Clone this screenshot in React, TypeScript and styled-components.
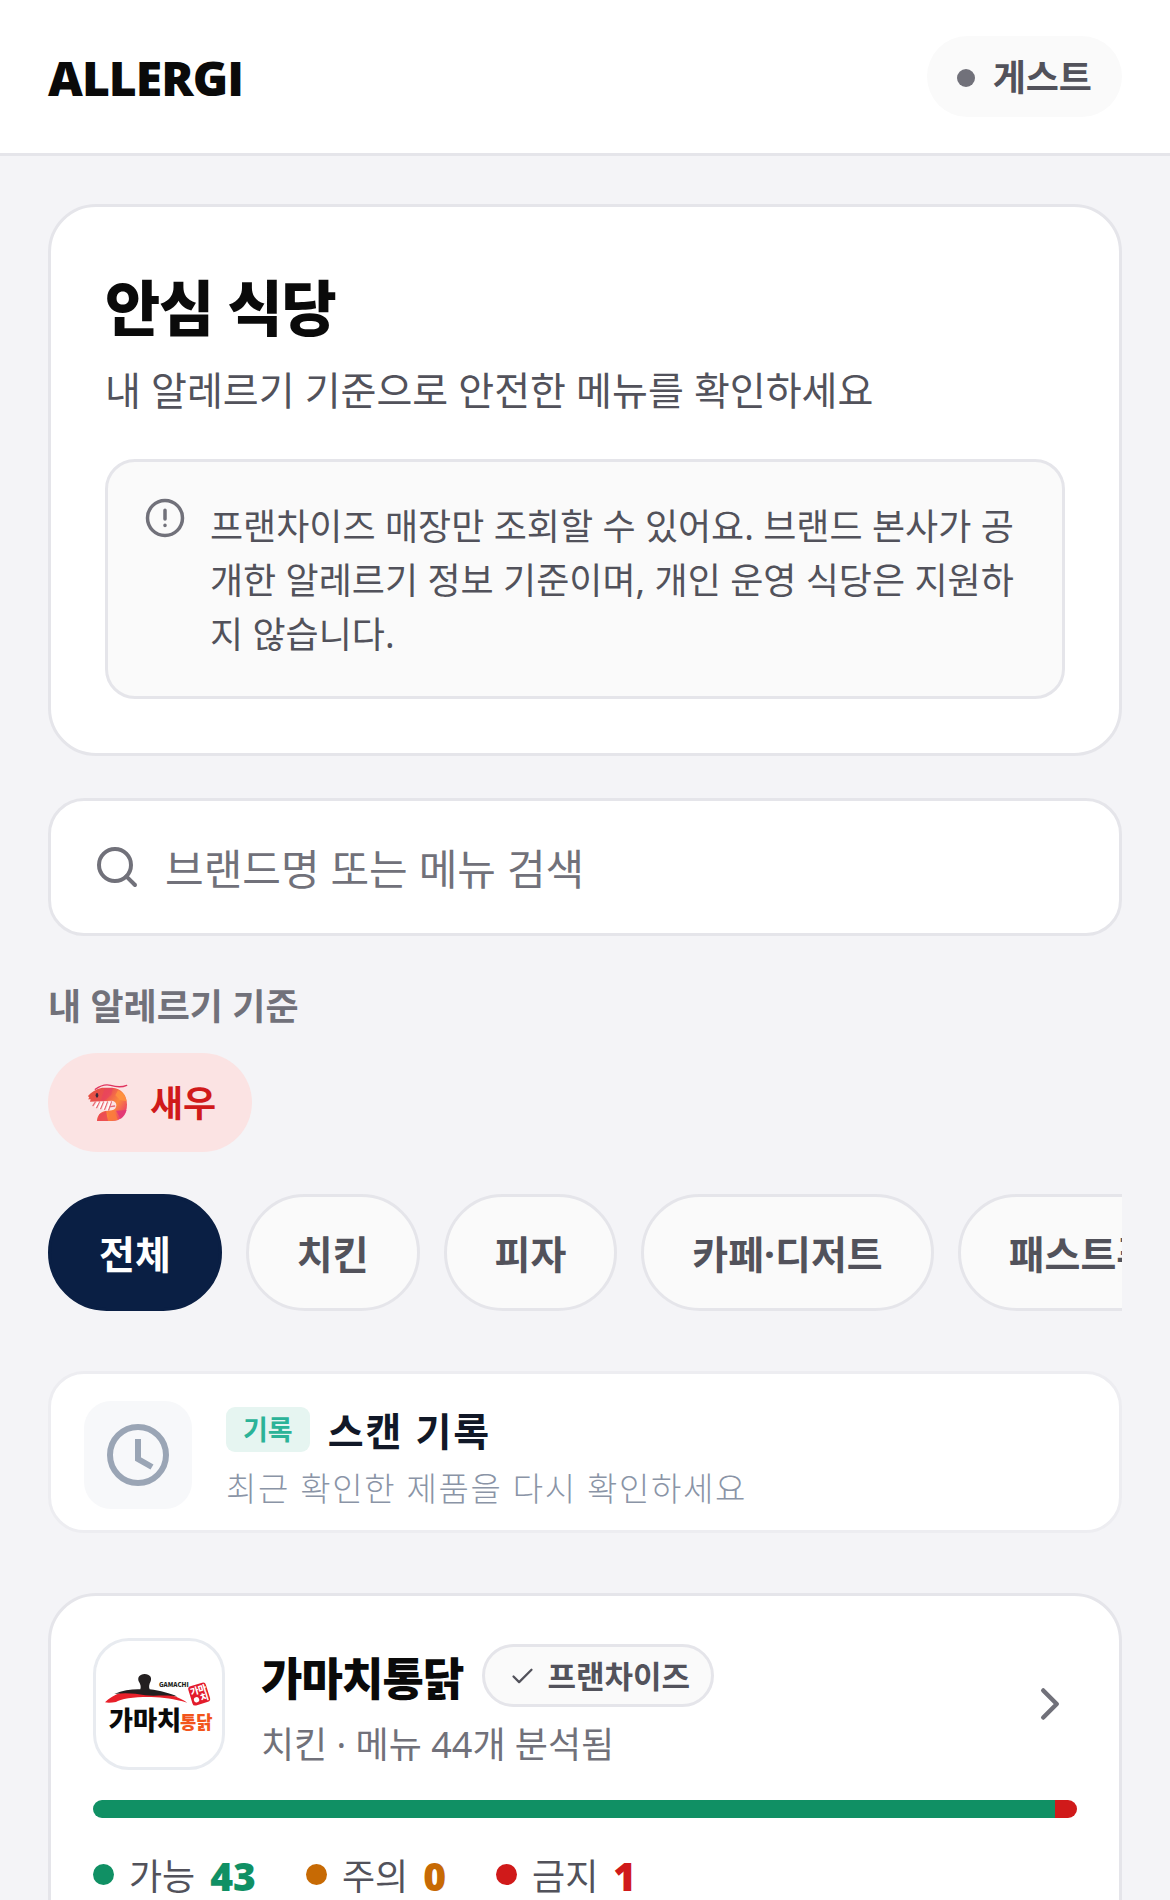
import React, { useState } from "react";
import styled, { createGlobalStyle } from "styled-components";
import { Search, ChevronRight, Check } from "lucide-react";

const GlobalStyle = createGlobalStyle`
  *, *::before, *::after { box-sizing: border-box; }
  body {
    margin: 0;
    background: #f4f4f7;
    color: #0a0a0a;
    font-family: "Noto Sans", "Noto Sans CJK KR", sans-serif;
    overflow-x: hidden;
  }
  h1, h2, h3, p, ul { margin: 0; padding: 0; }
  ul { list-style: none; }
  button, input { font: inherit; color: inherit; }
`;

const Header = styled.header`
  display: flex;
  align-items: center;
  justify-content: space-between;
  padding: 36px 48px;
  background: #fff;
  border-bottom: 3px solid #e5e5ea;
`;

const Wordmark = styled.a`
  padding-top: 2px;
  font-family: "Open Sans", "Noto Sans", sans-serif;
  font-size: 48px;
  line-height: 72px;
  font-weight: 800;
  letter-spacing: -0.02em;
  color: #0a0a0a;
  text-decoration: none;
`;

const Dot = styled.span<{ $color: string; $size: number }>`
  flex: none;
  width: ${(p) => p.$size}px;
  height: ${(p) => p.$size}px;
  border-radius: 50%;
  background: ${(p) => p.$color};
`;

const UserPill = styled.button`
  display: flex;
  align-items: center;
  gap: 18px;
  padding: 15px 30px 12px;
  border: 0;
  border-radius: 999px;
  background: #fafafa;
  color: #52525b;
  font-size: 36px;
  line-height: 54px;
  font-weight: 600;
`;

const Main = styled.main`
  display: flex;
  flex-direction: column;
  padding: 48px;
`;

const Intro = styled.section`
  padding: 56px 54px 54px;
  background: #fff;
  border: 3px solid #e5e5ea;
  border-radius: 48px;
`;

const Title = styled.h1`
  font-size: 60px;
  line-height: 90px;
  font-weight: 900;
  letter-spacing: -0.02em;
`;

const Subtitle = styled.p`
  margin-top: 7px;
  font-size: 39px;
  line-height: 60px;
  color: #52525b;
`;

const Notice = styled.div`
  display: flex;
  align-items: flex-start;
  gap: 24px;
  margin-top: 39px;
  padding: 35px 36px 34px;
  background: #fafafa;
  border: 3px solid #e5e5ea;
  border-radius: 30px;
  color: #52525b;
  font-size: 36px;
  line-height: 54px;
  svg { flex: none; color: #71717a; }
  p { padding-top: 3px; }
`;

const SearchBox = styled.label`
  display: flex;
  align-items: center;
  gap: 24px;
  height: 138px;
  margin-top: 42px;
  padding: 0 42px;
  background: #fff;
  border: 3px solid #e5e5ea;
  border-radius: 36px;
  color: #71717a;
  svg { flex: none; }
`;

const SearchInput = styled.input`
  flex: 1;
  min-width: 0;
  padding: 4px 0 0;
  border: 0;
  outline: 0;
  background: transparent;
  font-size: 42px;
  line-height: 60px;
  &::placeholder { color: #71717a; opacity: 1; }
`;

const SectionLabel = styled.h2`
  margin-top: 44px;
  font-size: 36px;
  line-height: 54px;
  font-weight: 700;
  color: #71717a;
`;

const AllergyChips = styled.ul`
  display: flex;
  gap: 18px;
  margin-top: 19px;
`;

const AllergyChip = styled.li`
  display: flex;
  align-items: center;
  gap: 21px;
  padding: 24px 36px 21px;
  border-radius: 999px;
  background: #fbe3e3;
  color: #d01a1a;
  font-size: 36px;
  line-height: 54px;
  font-weight: 700;
`;

const Categories = styled.nav`
  display: flex;
  gap: 24px;
  margin-top: 42px;
  overflow: hidden;
`;

const Category = styled.button<{ $active: boolean }>`
  flex: none;
  padding: 28px 48px 26px;
  border: 3px solid ${(p) => (p.$active ? "#0a1f44" : "#e5e5ea")};
  border-radius: 999px;
  background: ${(p) => (p.$active ? "#0a1f44" : "#fafafa")};
  color: ${(p) => (p.$active ? "#fff" : "#52525b")};
  font-size: 39px;
  line-height: 57px;
  font-weight: 700;
  white-space: nowrap;
`;

const History = styled.a`
  display: flex;
  align-items: flex-start;
  gap: 34px;
  margin-top: 60px;
  padding: 27px 33px 16px;
  background: #fff;
  border: 3px solid #ededf1;
  border-radius: 36px;
  color: #111827;
  text-decoration: none;
`;

const HistoryIcon = styled.span`
  display: grid;
  place-items: center;
  flex: none;
  width: 108px;
  height: 108px;
  border-radius: 27px;
  background: #f7f8fa;
`;

const HistoryHead = styled.span`
  display: flex;
  align-items: center;
  gap: 18px;
`;

const HistoryTag = styled.span`
  padding: 1px 17px 0;
  border-radius: 9px;
  background: #e6f5f1;
  color: #2bb398;
  font-size: 27px;
  line-height: 44px;
  font-weight: 600;
`;

const HistoryTitle = styled.span`
  padding-top: 3px;
  font-size: 39px;
  line-height: 54px;
  font-weight: 700;
  letter-spacing: 0.05em;
`;

const HistoryText = styled.span`
  display: block;
  margin-top: 5px;
  font-size: 33px;
  line-height: 51px;
  font-weight: 300;
  letter-spacing: 0.05em;
  color: #8a94a6;
`;

const BrandCard = styled.article`
  margin-top: 60px;
  padding: 42px;
  background: #fff;
  border: 3px solid #e5e5ea;
  border-radius: 48px;
`;

const BrandHead = styled.div`
  display: flex;
  align-items: center;
  gap: 36px;
  > svg { flex: none; color: #71717a; }
`;

const BrandLogo = styled.div`
  flex: none;
  width: 132px;
  height: 132px;
  border: 3px solid #e8ebf0;
  border-radius: 36px;
  background: #fff;
  overflow: hidden;
  svg { display: block; }
`;

const BrandInfo = styled.div`
  flex: 1;
  min-width: 0;
`;

const BrandTitleRow = styled.div`
  display: flex;
  align-items: center;
  gap: 18px;
`;

const BrandName = styled.h3`
  padding-top: 8px;
  font-size: 45px;
  line-height: 66px;
  font-weight: 900;
  letter-spacing: -0.02em;
`;

const BrandBadge = styled.span`
  display: flex;
  align-items: center;
  gap: 12px;
  padding: 7px 21px 5px 24px;
  border: 3px solid #e5e5ea;
  border-radius: 999px;
  background: #fafafa;
  color: #52525b;
  font-size: 31px;
  line-height: 45px;
  font-weight: 600;
`;

const BrandMeta = styled.p`
  margin-top: 7px;
  font-size: 36px;
  line-height: 51px;
  color: #71717a;
`;

const Bar = styled.div`
  display: flex;
  height: 18px;
  margin-top: 30px;
  border-radius: 9px;
  overflow: hidden;
`;

const BarPart = styled.span<{ $color: string }>`
  background: ${(p) => p.$color};
`;

const Legend = styled.ul`
  display: flex;
  gap: 50px;
  margin-top: 26px;
`;

const LegendItem = styled.li`
  display: flex;
  align-items: center;
  gap: 15px;
  font-size: 36px;
  line-height: 54px;
  color: #52525b;
`;

const LegendLabel = styled.span`
  padding-top: 6px;
`;

const Count = styled.strong<{ $color: string }>`
  padding-top: 3px;
  font-size: 39px;
  font-weight: 900;
  color: ${(p) => p.$color};
`;

const InfoIcon = () => (
  <svg width="42" height="42" viewBox="0 0 24 24" fill="none" stroke="currentColor" strokeWidth="2" strokeLinecap="round" aria-hidden="true">
    <circle cx="12" cy="12" r="10" />
    <path d="M12 7.5v5M12 16.2v.1" />
  </svg>
);

const Shrimp = () => (
  <svg width="45" height="42" viewBox="42 69 135 126" aria-hidden="true">
    <defs>
      <linearGradient id="shell" x1="0" y1="0" x2="1" y2="0.6">
        <stop offset="0" stopColor="#e4513c" />
        <stop offset="0.45" stopColor="#ec4f52" />
        <stop offset="0.75" stopColor="#fb8a3c" />
        <stop offset="1" stopColor="#ee4a62" />
      </linearGradient>
    </defs>
    <path d="M76 88C92 76 106 72 122 76C138 81 154 83 170 76" fill="none" stroke="#e0345f" strokeWidth="4" strokeLinecap="round" />
    <path d="M54 108C64 96 78 87 96 83H126C154 84 171 104 171 134C171 164 153 183 126 183H81C81 168 90 156 106 153L124 152C134 150 139 144 139 136C139 128 134 123 126 122L60 125L62 118L54 118L58 113Z" fill="url(#shell)" />
    <path d="M104 84H128L124 104L104 122H92Z" fill="#e83f62" opacity="0.55" />
    <path d="M144 91C158 98 168 110 170 124L150 120L136 106Z" fill="#ff9440" opacity="0.8" />
    <path d="M138 152L170 150C167 162 160 171 152 177Z" fill="#e0337a" opacity="0.8" />
    <path d="M88 163L108 153L114 183H81Z" fill="#ea4456" opacity="0.8" />
    <path d="M114 153L132 150L144 180L116 183Z" fill="#fb7b3c" opacity="0.9" />
    <path d="M76 126L69 137M88 126L80 143M100 126L92 146M112 126L104 148M124 126L116 150M134 138L122 140" fill="none" stroke="#e86a74" strokeWidth="4" strokeLinecap="round" />
    <path d="M84 127L76 140M96 127L88 144M108 127L100 146M120 127L112 148" fill="none" stroke="#fff" strokeWidth="4" strokeLinecap="round" />
    <ellipse cx="81" cy="106" rx="4" ry="7" fill="#3a2a3c" />
  </svg>
);

const ClockIcon = () => (
  <svg width="62" height="62" viewBox="0 0 62 62" fill="none" stroke="#9aa5b5" aria-hidden="true">
    <circle cx="31" cy="31" r="28" strokeWidth="6" />
    <path d="M31 15V35L45 43" strokeWidth="6" />
  </svg>
);

const LogoText = styled.text`
  font-family: "Noto Sans CJK KR", sans-serif;
  font-weight: 900;
`;

const GamachiLogo = () => (
  <svg width="126" height="126" viewBox="48 63 378 378" role="img" aria-label="가마치통닭">
    <path d="M75 247C108 212 168 205 222 213C264 220 296 230 322 248C282 236 250 233 214 231C170 230 120 236 108 246C96 248 84 249 75 247Z" fill="#e8202a" />
    <path d="M103 222C128 211 158 207 181 208C184 200 181 192 176 184C172 172 178 163 194 162C210 163 216 172 212 184C207 194 206 202 209 208C240 212 272 220 292 230C258 223 226 230 196 226C166 220 134 218 103 222Z" fill="#231f20" />
    <LogoText x="237" y="202" fontSize="19" fill="#231f20">GAMACHI</LogoText>
    <g transform="rotate(-17 358 222)">
      <rect x="330" y="192" width="55" height="60" rx="9" fill="#e31b2b" />
      <LogoText x="334" y="219" fontSize="27" fill="#fff">가마</LogoText>
      <LogoText x="358" y="245" fontSize="27" fill="#fff">치</LogoText>
      <circle cx="345" cy="236" r="8" fill="#fff" />
    </g>
    <LogoText x="86" y="329" fontSize="79" fill="#0a0a0a">가마치</LogoText>
    <LogoText x="300" y="326" fontSize="53" fill="#f2541b">통닭</LogoText>
  </svg>
);

const categories = ["전체", "치킨", "피자", "카페·디저트", "패스트푸드"];

const counts = [
  { label: "가능", value: 43, color: "#109064" },
  { label: "주의", value: 0, color: "#c76a04" },
  { label: "금지", value: 1, color: "#d01a1a" },
];

export default function App() {
  const [active, setActive] = useState(categories[0]);
  return (
    <>
      <GlobalStyle />
      <Header>
        <Wordmark href="#">ALLERGI</Wordmark>
        <UserPill type="button">
          <Dot $color="#71717a" $size={18} />
          게스트
        </UserPill>
      </Header>
      <Main>
        <Intro>
          <Title>안심 식당</Title>
          <Subtitle>내 알레르기 기준으로 안전한 메뉴를 확인하세요</Subtitle>
          <Notice>
            <InfoIcon />
            <p>프랜차이즈 매장만 조회할 수 있어요. 브랜드 본사가 공개한 알레르기 정보 기준이며, 개인 운영 식당은 지원하지 않습니다.</p>
          </Notice>
        </Intro>
        <SearchBox>
          <Search size={48} strokeWidth={2} aria-hidden="true" />
          <SearchInput type="text" placeholder="브랜드명 또는 메뉴 검색" aria-label="브랜드명 또는 메뉴 검색" />
        </SearchBox>
        <SectionLabel>내 알레르기 기준</SectionLabel>
        <AllergyChips>
          <AllergyChip>
            <Shrimp />
            새우
          </AllergyChip>
        </AllergyChips>
        <Categories>
          {categories.map((c) => (
            <Category key={c} type="button" $active={c === active} onClick={() => setActive(c)}>
              {c}
            </Category>
          ))}
        </Categories>
        <History href="#">
          <HistoryIcon>
            <ClockIcon />
          </HistoryIcon>
          <span>
            <HistoryHead>
              <HistoryTag>기록</HistoryTag>
              <HistoryTitle>스캔 기록</HistoryTitle>
            </HistoryHead>
            <HistoryText>최근 확인한 제품을 다시 확인하세요</HistoryText>
          </span>
        </History>
        <BrandCard>
          <BrandHead>
            <BrandLogo>
              <GamachiLogo />
            </BrandLogo>
            <BrandInfo>
              <BrandTitleRow>
                <BrandName>가마치통닭</BrandName>
                <BrandBadge>
                  <Check size={27} strokeWidth={2} aria-hidden="true" />
                  프랜차이즈
                </BrandBadge>
              </BrandTitleRow>
              <BrandMeta>치킨 · 메뉴 44개 분석됨</BrandMeta>
            </BrandInfo>
            <ChevronRight size={54} strokeWidth={2} aria-hidden="true" />
          </BrandHead>
          <Bar>
            {counts.map((c) => (
              <BarPart key={c.label} $color={c.color} style={{ flexGrow: c.value }} />
            ))}
          </Bar>
          <Legend>
            {counts.map((c) => (
              <LegendItem key={c.label}>
                <Dot $color={c.color} $size={21} />
                <LegendLabel>{c.label}</LegendLabel>
                <Count $color={c.color}>{c.value}</Count>
              </LegendItem>
            ))}
          </Legend>
        </BrandCard>
      </Main>
    </>
  );
}
